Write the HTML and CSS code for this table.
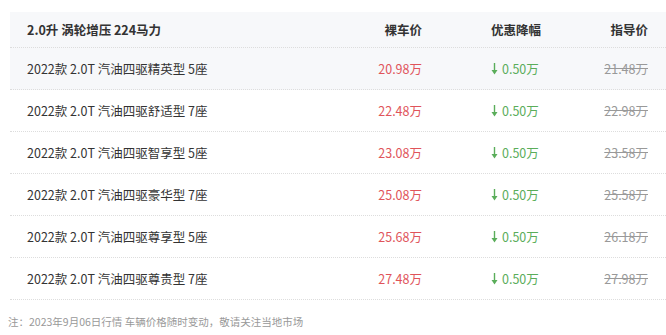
FILE: index.html
```html
<!DOCTYPE html>
<html lang="zh-CN">
<head>
    <meta charset="UTF-8">
    <meta name="viewport" content="width=device-width, initial-scale=1.0">
    <title>车型报价</title>
    <link rel="stylesheet" href="styles.css">
</head>
<body>
    <!-- Price table -->
    <div class="price-table">
        <div class="row head">
            <div class="name">2.0升 涡轮增压 224马力</div>
            <div class="price">裸车价</div>
            <div class="cut">优惠降幅</div>
            <div class="guide">指导价</div>
        </div>
        <div id="rows"></div>
    </div>

    <p class="note">注：2023年9月06日行情 车辆价格随时变动，敬请关注当地市场</p>

    <script>
        // Model list
        const models = [
            { name: "2022款 2.0T 汽油四驱精英型 5座", price: "20.98", cut: "0.50", guide: "21.48" },
            { name: "2022款 2.0T 汽油四驱舒适型 7座", price: "22.48", cut: "0.50", guide: "22.98" },
            { name: "2022款 2.0T 汽油四驱智享型 5座", price: "23.08", cut: "0.50", guide: "23.58" },
            { name: "2022款 2.0T 汽油四驱豪华型 7座", price: "25.08", cut: "0.50", guide: "25.58" },
            { name: "2022款 2.0T 汽油四驱尊享型 5座", price: "25.68", cut: "0.50", guide: "26.18" },
            { name: "2022款 2.0T 汽油四驱尊贵型 7座", price: "27.48", cut: "0.50", guide: "27.98" }
        ];

        const arrow = '<svg class="arrow" width="7" height="12" viewBox="0 0 7 12"><rect x="2.8" y="0" width="1.4" height="8" fill="currentColor"/><polygon points="0.5,7 6.5,7 3.5,11.5" fill="currentColor"/></svg>';

        function renderRows() {
            const box = document.getElementById("rows");
            models.forEach((m, i) => {
                const div = document.createElement("div");
                div.className = i === 0 ? "row item active" : "row item";
                div.innerHTML = `
                    <div class="name">${m.name}</div>
                    <div class="price">${m.price}万</div>
                    <div class="cut">${arrow}${m.cut}万</div>
                    <div class="guide"><s>${m.guide}万</s></div>
                `;
                box.appendChild(div);
            });
        }

        renderRows();
    </script>
</body>
</html>
```

FILE: styles.css
```css
/* Global */
* {
    box-sizing: border-box;
    margin: 0;
    padding: 0;
}

body {
    font-family: "Noto Sans CJK SC", "Noto Sans", sans-serif;
    background-color: #fff;
    color: #333;
    padding: 12px 0 0 10px;
}

/* Table */
.price-table {
    width: 656px;
}

.row {
    display: grid;
    grid-template-columns: 1fr 80px 146px 80px;
    align-items: center;
    padding: 0 18px 0 17px;
    border-bottom: 1px dotted #ddd;
    font-size: 12.5px;
}

.row.head {
    height: 36px;
    background-color: #f7f8fa;
    font-weight: bold;
    color: #333;
}

.row.item {
    height: 42px;
}

.row.active {
    background-color: #f7f8fa;
}

.row .price,
.row .guide {
    text-align: right;
}

.row .cut {
    padding-left: 69px;
    display: flex;
    align-items: center;
}

.item .price {
    color: #e0545a;
}

.item .cut {
    color: #5aad5a;
}

.item .guide {
    color: #999;
}

.arrow {
    margin-right: 4px;
}

/* Footnote */
.note {
    font-size: 10.5px;
    color: #999;
    padding: 14px 0 0 0;
    margin-left: -2px;
}
```
